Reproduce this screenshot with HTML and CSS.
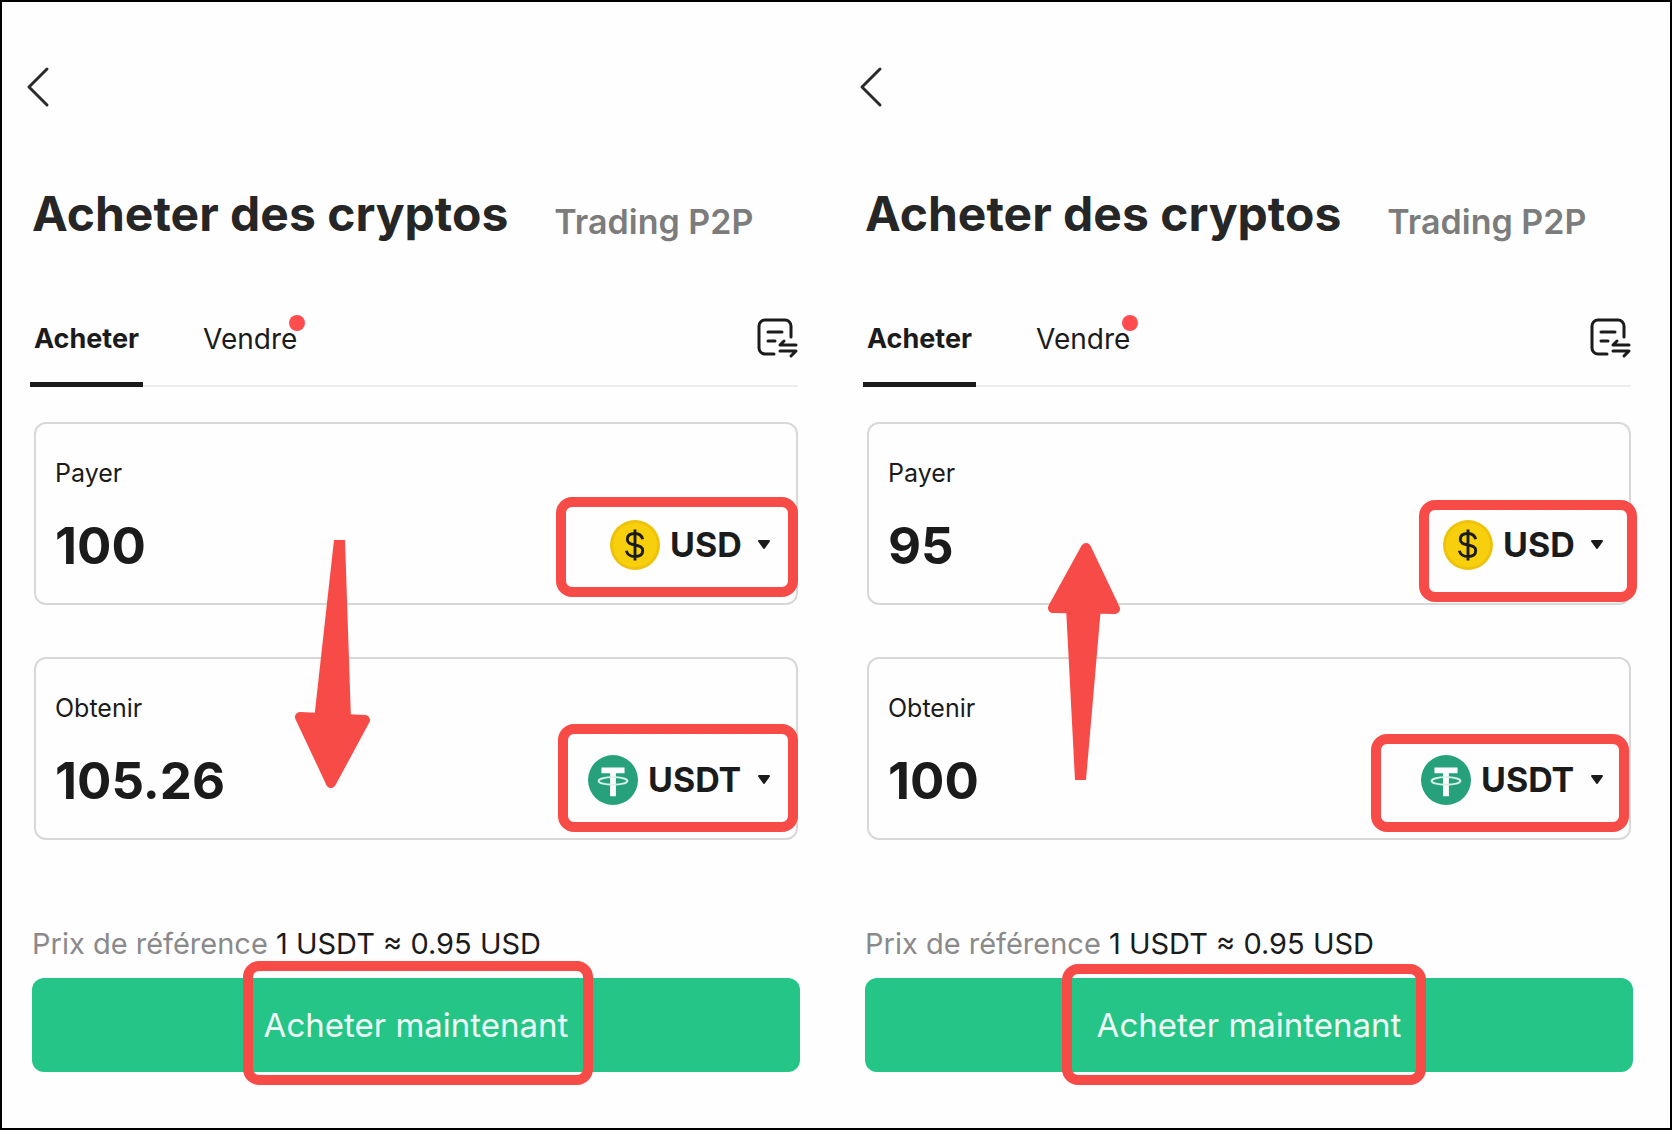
FILE: index.html
```html
<!DOCTYPE html>
<html lang="fr">
<head>
    <meta charset="UTF-8">
    <meta name="viewport" content="width=device-width, initial-scale=1.0">
    <title>Acheter des cryptos</title>
    <link rel="stylesheet" href="styles.css">
</head>
<body>

<!-- Shared icons -->
<svg class="sprite" aria-hidden="true">
    <symbol id="icon-back" viewBox="0 0 24 42">
        <path d="M21 3 L3 21 L21 39" fill="none" stroke="currentColor" stroke-width="3" stroke-linecap="round" stroke-linejoin="round"/>
    </symbol>
    <symbol id="icon-orders" viewBox="0 0 42 42">
        <g fill="none" stroke="currentColor" stroke-width="3" stroke-linecap="round" stroke-linejoin="round">
            <path d="M35 19 V8 a6 6 0 0 0 -6 -6 H9 a6 6 0 0 0 -6 6 V30 a6 6 0 0 0 6 6 H18"/>
            <path d="M12 14 H26 M12 23 H19"/>
            <path d="M40 27 H24 L28 23 M24 33 H40 L35 38"/>
        </g>
    </symbol>
    <symbol id="icon-usd" viewBox="0 0 52 52">
        <circle cx="26" cy="26" r="26" fill="#eec20b"/>
        <circle cx="26" cy="26" r="23" fill="#f8cf0c"/>
        <path d="M26 10 V42 M34 20 c-1 -4 -4 -6 -8 -6 c-5 0 -8 2 -8 6 c0 4 3 5 8 6 c5 1 8 2 8 6 c0 4 -3 6 -8 6 c-5 0 -8 -2 -9 -6" fill="none" stroke="#1b1b1b" stroke-width="3"/>
    </symbol>
    <symbol id="icon-usdt" viewBox="0 0 52 52">
        <circle cx="26" cy="26" r="26" fill="#26a17b"/>
        <path d="M14 13 H38 V19 H29 V43 H23 V19 H14 Z" fill="#fff"/>
        <ellipse cx="26" cy="27" rx="15" ry="4" fill="none" stroke="#d8f0e7" stroke-width="2"/>
    </symbol>
    <symbol id="icon-caret" viewBox="0 0 14 10">
        <path d="M2 1 H12 L7 8 Z" fill="currentColor" stroke="currentColor" stroke-width="2" stroke-linejoin="round"/>
    </symbol>
</svg>

<main class="board">

    <section class="panel">
        <button type="button" class="back" aria-label="Retour"><svg><use href="#icon-back"/></svg></button>

        <nav class="titles">
            <h1><a href="#">Acheter des cryptos</a></h1>
            <a href="#" class="secondary">Trading P2P</a>
        </nav>

        <div class="tabs">
            <button type="button" class="tab active">Acheter</button>
            <button type="button" class="tab">Vendre<span class="dot"></span></button>
            <button type="button" class="orders" aria-label="Commandes"><svg><use href="#icon-orders"/></svg></button>
        </div>

        <div class="fields">
            <div class="field">
                <label for="payA">Payer</label>
                <div class="row">
                    <input type="text" id="payA" value="100">
                    <div class="currency">
                        <svg class="coin"><use href="#icon-usd"/></svg>
                        <select aria-label="Devise"><option>USD</option></select>
                        <svg class="caret"><use href="#icon-caret"/></svg>
                    </div>
                </div>
                <span class="mark mark-pay-a"></span>
            </div>
            <div class="field">
                <label for="getA">Obtenir</label>
                <div class="row">
                    <input type="text" id="getA" value="105.26">
                    <div class="currency">
                        <svg class="coin"><use href="#icon-usdt"/></svg>
                        <select aria-label="Crypto"><option>USDT</option></select>
                        <svg class="caret"><use href="#icon-caret"/></svg>
                    </div>
                </div>
                <span class="mark mark-get-a"></span>
            </div>
            <svg class="arrow arrow-down" viewBox="0 0 78 250">
                <path d="M40 0 L51 0 L57 180 L20 180 Z"/>
                <path class="head" d="M6 177 L71 180 L37 243 Z"/>
            </svg>
        </div>

        <p class="price">Prix de référence <strong>1 USDT ≈ 0.95 USD</strong></p>

        <div class="action">
            <button type="submit" class="submit-btn">Acheter maintenant</button>
            <span class="mark mark-buy-a"></span>
        </div>
    </section>

    <section class="panel">
        <button type="button" class="back" aria-label="Retour"><svg><use href="#icon-back"/></svg></button>

        <nav class="titles">
            <h1><a href="#">Acheter des cryptos</a></h1>
            <a href="#" class="secondary">Trading P2P</a>
        </nav>

        <div class="tabs">
            <button type="button" class="tab active">Acheter</button>
            <button type="button" class="tab">Vendre<span class="dot"></span></button>
            <button type="button" class="orders" aria-label="Commandes"><svg><use href="#icon-orders"/></svg></button>
        </div>

        <div class="fields">
            <div class="field">
                <label for="payB">Payer</label>
                <div class="row">
                    <input type="text" id="payB" value="95">
                    <div class="currency">
                        <svg class="coin"><use href="#icon-usd"/></svg>
                        <select aria-label="Devise"><option>USD</option></select>
                        <svg class="caret"><use href="#icon-caret"/></svg>
                    </div>
                </div>
                <span class="mark mark-pay-b"></span>
            </div>
            <div class="field">
                <label for="getB">Obtenir</label>
                <div class="row">
                    <input type="text" id="getB" value="100">
                    <div class="currency">
                        <svg class="coin"><use href="#icon-usdt"/></svg>
                        <select aria-label="Crypto"><option>USDT</option></select>
                        <svg class="caret"><use href="#icon-caret"/></svg>
                    </div>
                </div>
                <span class="mark mark-get-b"></span>
            </div>
            <svg class="arrow arrow-up" viewBox="0 0 74 240">
                <path d="M19 66 L54 66 L39 239 L28 239 Z"/>
                <path class="head" d="M6 67 L68 68 L39 7 Z"/>
            </svg>
        </div>

        <p class="price">Prix de référence <strong>1 USDT ≈ 0.95 USD</strong></p>

        <div class="action">
            <button type="submit" class="submit-btn">Acheter maintenant</button>
            <span class="mark mark-buy-b"></span>
        </div>
    </section>

</main>

</body>
</html>
```
FILE: styles.css
```css
* {
    box-sizing: border-box;
}

body {
    margin: 0;
    font-family: Inter, "Liberation Sans", sans-serif;
    background-color: #fefefe;
    color: #1b1b1b;
}

a {
    color: inherit;
    text-decoration: none;
}

button,
input,
select {
    font-family: inherit;
    color: inherit;
    background: none;
    border: none;
    margin: 0;
    padding: 0;
}

button {
    cursor: pointer;
}

svg {
    display: block;
}

.sprite {
    position: absolute;
    width: 0;
    height: 0;
}

.board {
    display: flex;
    min-height: 100vh;
    padding-right: 2px;
    border: 2px solid #000;
}

.panel {
    flex: 1;
    min-width: 0;
    padding: 64px 37px 54px 32px;
}

.back {
    display: block;
    margin-left: -8px;
    color: #2a2a2a;
}

.back svg {
    width: 24px;
    height: 42px;
}

/* Titles */
.titles {
    display: flex;
    align-items: flex-end;
    gap: 46px;
    margin: 76px 0 0 -2px;
    white-space: nowrap;
}

h1 {
    margin: 0;
    font-size: 48px;
    line-height: 60px;
    font-weight: 700;
    color: #262626;
}

.secondary {
    font-size: 34px;
    line-height: 44px;
    font-weight: 600;
    color: #7c7c7c;
}

/* Tabs */
.tabs {
    display: flex;
    align-items: flex-start;
    gap: 56px;
    margin: 78px 0 35px -4px;
    box-shadow: inset 0 -2px 0 #ededed;
}

.tab {
    position: relative;
    padding: 0 4px 26px;
    border-bottom: 5px solid transparent;
    font-size: 28px;
    line-height: 34px;
}

.tab.active {
    font-size: 27px;
    font-weight: 700;
    border-color: #1b1b1b;
}

.dot {
    position: absolute;
    top: -7px;
    right: -4px;
    width: 16px;
    height: 16px;
    border-radius: 50%;
    background-color: #ff4d4f;
}

.orders {
    margin: -4px 0 0 auto;
}

.orders svg {
    width: 42px;
    height: 42px;
}

/* Amount fields */
.fields {
    position: relative;
    display: flex;
    flex-direction: column;
    gap: 52px;
}

.field {
    position: relative;
    padding: 34px 25px 28px 19px;
    border: 2px solid #d8d8d8;
    border-radius: 12px;
}

.field label {
    display: block;
    margin-bottom: 27px;
    font-size: 25px;
    line-height: 30px;
}

.row {
    display: flex;
    align-items: center;
}

.row input {
    flex: 1;
    min-width: 0;
    height: 60px;
    font-size: 51px;
    font-weight: 700;
}

.currency {
    position: relative;
    display: flex;
    align-items: center;
    gap: 10px;
}

.coin {
    width: 50px;
    height: 50px;
}

.currency select {
    appearance: none;
    padding-right: 29px;
    font-size: 34px;
    line-height: 40px;
    font-weight: 700;
}

.caret {
    position: absolute;
    right: 0;
    width: 14px;
    height: 10px;
    pointer-events: none;
}

/* Price and action */
.price {
    margin: 87px 0 17px -2px;
    font-size: 29px;
    line-height: 34px;
    color: #8a8a8a;
}

.price strong {
    font-weight: 400;
    color: #1b1b1b;
}

.action {
    position: relative;
    margin: 0 -2px;
}

.submit-btn {
    display: block;
    width: 100%;
    height: 94px;
    border-radius: 12px;
    background-color: #25c587;
    color: #effbf6;
    font-size: 33px;
}

/* Red annotations laid over the panels */
.mark {
    position: absolute;
    border: 10px solid #f74b47;
    border-radius: 16px;
    pointer-events: none;
}

.mark-pay-a {
    top: 73px;
    right: -2px;
    width: 242px;
    height: 100px;
}

.mark-get-a {
    top: 65px;
    right: -2px;
    width: 240px;
    height: 108px;
}

.mark-buy-a {
    top: -17px;
    left: calc(50% - 173px);
    width: 350px;
    height: 124px;
}

.mark-pay-b {
    top: 76px;
    right: -8px;
    width: 218px;
    height: 102px;
}

.mark-get-b {
    top: 75px;
    right: 0;
    width: 258px;
    height: 98px;
}

.mark-buy-b {
    top: -14px;
    left: calc(50% - 187px);
    width: 364px;
    height: 121px;
}

.arrow {
    position: absolute;
    fill: #f74b47;
    pointer-events: none;
}

.arrow .head {
    stroke: #f74b47;
    stroke-width: 10px;
    stroke-linejoin: round;
}

.arrow-down {
    top: 118px;
    left: 260px;
    width: 78px;
    height: 250px;
}

.arrow-up {
    top: 119px;
    left: 180px;
    width: 74px;
    height: 240px;
}
```
